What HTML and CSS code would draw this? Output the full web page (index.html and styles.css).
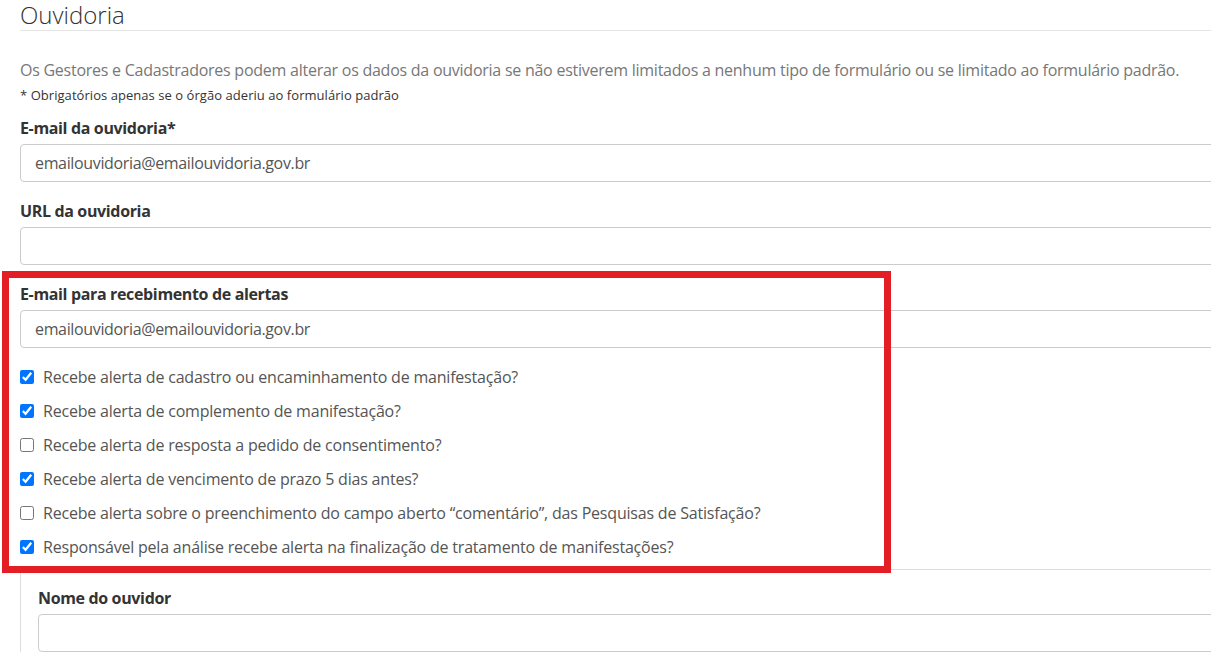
FILE: index.html
```html
<!DOCTYPE html>
<html lang="pt-BR">
  <head>
    <meta charset="UTF-8" />
    <title>Ouvidoria</title>
    <link rel="stylesheet" href="styles.css">
  </head>
  <body>
    <div class="page">
      <h1 class="page-title">Ouvidoria</h1>

      <p class="intro">Os Gestores e Cadastradores podem alterar os dados da ouvidoria se não estiverem limitados a nenhum tipo de formulário ou se limitado ao formulário padrão.</p>
      <p class="note">* Obrigatórios apenas se o órgão aderiu ao formulário padrão</p>

      <div class="form-group">
        <label class="field-label">E-mail da ouvidoria*</label>
        <input class="field-input" type="text" value="emailouvidoria@emailouvidoria.gov.br">
      </div>

      <div class="form-group">
        <label class="field-label">URL da ouvidoria</label>
        <input class="field-input" type="text" value="">
      </div>

      <div class="form-group">
        <label class="field-label">E-mail para recebimento de alertas</label>
        <input class="field-input" type="text" value="emailouvidoria@emailouvidoria.gov.br">
      </div>

      <div class="checks">
        <label class="check"><input type="checkbox" checked> Recebe alerta de cadastro ou encaminhamento de manifestação?</label>
        <label class="check"><input type="checkbox" checked> Recebe alerta de complemento de manifestação?</label>
        <label class="check"><input type="checkbox"> Recebe alerta de resposta a pedido de consentimento?</label>
        <label class="check"><input type="checkbox" checked> Recebe alerta de vencimento de prazo 5 dias antes?</label>
        <label class="check"><input type="checkbox"> Recebe alerta sobre o preenchimento do campo aberto “comentário”, das Pesquisas de Satisfação?</label>
        <label class="check"><input type="checkbox" checked> Responsável pela análise recebe alerta na finalização de tratamento de manifestações?</label>
      </div>

      <div class="ouvidor">
        <div class="form-group">
          <label class="field-label">Nome do ouvidor</label>
          <input class="field-input" type="text" value="">
        </div>
      </div>
    </div>

    <div class="highlight"></div>
  </body>
</html>
```

FILE: styles.css
```css
html,
body {
  margin: 0;
  overflow: hidden;
}

body {
  position: relative;
  font-family: "Open Sans", "Liberation Sans", sans-serif;
  color: #333;
  background: #fff;
}

.page {
  width: 1240px;
  padding-left: 20px;
}

.page-title {
  margin: 0;
  font-size: 24px;
  font-weight: 300;
  line-height: 30px;
  color: #333;
  border-bottom: 1px solid #e5e5e5;
}

.intro {
  margin: 28px 0 6px;
  font-size: 16px;
  line-height: 22px;
  letter-spacing: -0.25px;
  color: #777;
}

.note {
  margin: 0 0 13px;
  font-size: 13px;
  line-height: 17px;
  letter-spacing: 0.05px;
  color: #333;
}

.form-group {
  margin-bottom: 18px;
}

.field-label {
  display: block;
  margin-bottom: 5px;
  font-size: 16px;
  font-weight: 700;
  line-height: 22px;
  letter-spacing: -0.35px;
  color: #333;
}

.field-input {
  display: block;
  box-sizing: border-box;
  width: 100%;
  height: 38px;
  padding: 6px 14px;
  border: 1px solid #ccc;
  border-radius: 4px;
  font-family: inherit;
  font-size: 16px;
  letter-spacing: -0.35px;
  color: #555;
  background: #fff;
}

.checks {
  margin-top: 18px;
  margin-bottom: 11px;
}

.check {
  display: flex;
  align-items: center;
  gap: 9px;
  height: 22px;
  margin-bottom: 12px;
  font-size: 16px;
  letter-spacing: -0.2px;
  color: #555;
}

.check:last-child {
  margin-bottom: 0;
}

.check input {
  width: 14px;
  height: 14px;
  margin: 0;
}

.ouvidor {
  border-top: 1px solid #ddd;
  border-left: 1px solid #ddd;
  padding: 17px 0 0 17px;
}

.highlight {
  position: absolute;
  left: 2px;
  top: 271px;
  width: 875px;
  height: 288px;
  border: 7px solid #e31e24;
  pointer-events: none;
}
```
